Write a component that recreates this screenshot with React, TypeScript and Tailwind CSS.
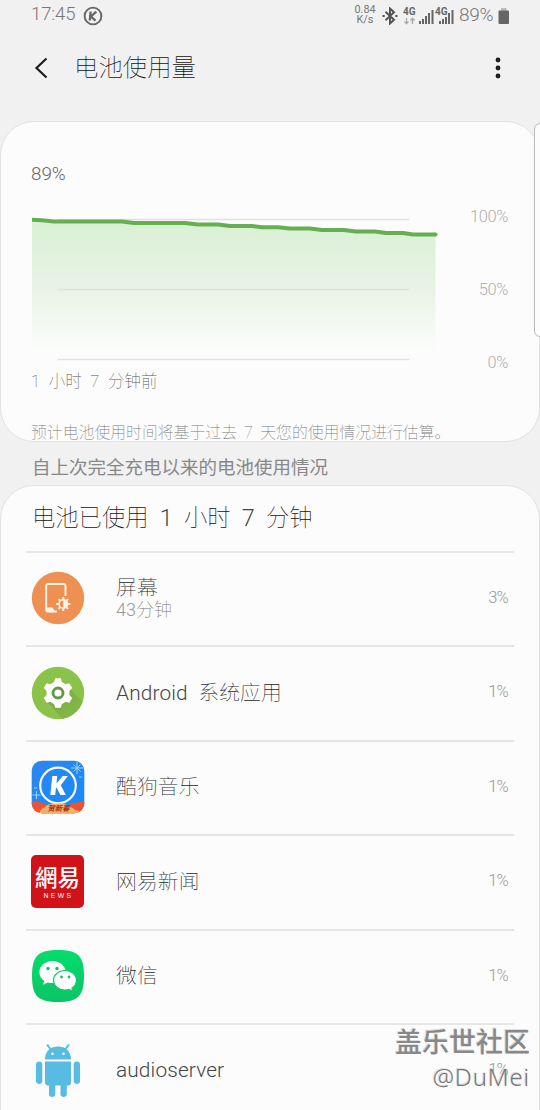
import type { ReactNode } from 'react';

type AppUsage = {
  name: string;
  detail?: string;
  percent: string;
  icon: ReactNode;
};

function ScreenIcon() {
  return (
    <svg viewBox="0 0 54 54" className="size-[54px]">
      <circle cx="27" cy="27" r="26.2" fill="#ee9052" />
      <path d="M26 40.500H17A2 2 0 0 1 15.200 38.500V15A2 2 0 0 1 17.200 13H32.500A2 2 0 0 1 34.500 15V25" fill="none" stroke="#fff3e8" strokeWidth="1.900" />
      <path d="M15 36.500h6.500l3 4.800H17a2 2 0 0 1-2-2z" fill="#fff3e8" />
      <circle cx="32.300" cy="33" r="8" fill="#ee9052" />
      <g stroke="#fff3e8" strokeWidth="1.900">
        <path d="M32.300 26v14M25.300 33h14M27.500 28.200l9.600 9.600M37.100 28.200l-9.600 9.600" />
      </g>
      <circle cx="32.300" cy="33" r="5" fill="#fff3e8" />
      <path d="M32.300 29.500a3.500 3.500 0 0 0 0 7z" fill="#ee9052" />
    </svg>
  );
}

function GearIcon() {
  return (
    <svg viewBox="0 0 54 54" className="size-[54px]">
      <defs>
        <clipPath id="gear-clip">
          <circle cx="27" cy="27" r="26.2" />
        </clipPath>
        <linearGradient id="gear-shade" x1="0" y1="0" x2="1" y2="1">
          <stop offset="0" stopColor="#78ab42" />
          <stop offset="1" stopColor="#88bd4a" />
        </linearGradient>
      </defs>
      <circle cx="27" cy="27" r="26.2" fill="#8bc34a" />
      <path d="M14 34L38 22L60 44V60H38z" fill="url(#gear-shade)" clipPath="url(#gear-clip)" />
      <g fill="#fff">
        <circle cx="27" cy="27" r="11.500" />
        <path d="M24.200 12.200h5.600l1.600 6h-8.800z" />
        <path d="M24.200 12.200h5.600l1.600 6h-8.800z" transform="rotate(60 27 27)" />
        <path d="M24.200 12.200h5.600l1.600 6h-8.800z" transform="rotate(120 27 27)" />
        <path d="M24.200 12.200h5.600l1.600 6h-8.800z" transform="rotate(180 27 27)" />
        <path d="M24.200 12.200h5.600l1.600 6h-8.800z" transform="rotate(240 27 27)" />
        <path d="M24.200 12.200h5.600l1.600 6h-8.800z" transform="rotate(300 27 27)" />
      </g>
      <circle cx="27" cy="27" r="5" fill="#fff" stroke="#67964a" strokeWidth="2.800" />
    </svg>
  );
}

function KugouIcon() {
  return (
    <svg viewBox="0 0 54 54" className="size-[54px]">
      <defs>
        <clipPath id="kugou-clip">
          <rect x="0.700" y="0.700" width="52.600" height="52.600" rx="10" />
        </clipPath>
        <linearGradient id="kugou-bg" x1="0" y1="0" x2="1" y2="1">
          <stop offset="0" stopColor="#2f86ee" />
          <stop offset="1" stopColor="#168bfb" />
        </linearGradient>
      </defs>
      <g clipPath="url(#kugou-clip)">
        <rect width="54" height="54" fill="url(#kugou-bg)" />
        <circle cx="27" cy="25.500" r="17.800" fill="none" stroke="#f5fbff" strokeWidth="2.200" />
        <path d="M21.300 16h4.900l-.7 7.400 6.200-7.400h5.200l-7.100 9.200 5 9.800h-5.400l-3.900-7.500-.6.800-.7 6.700h-4.900z" fill="#fff" />
        <g stroke="#9bd3ff" strokeWidth="1">
          <path d="M46 2v12M40 8h12M42.500 4.500l7 7M49.500 4.500l-7 7M5.500 31v8M1.500 35h8" />
          <path d="M48 17h3M3 28h3" />
        </g>
        <path d="M0 43q6-3 11 0q4 0 5 3h22q2-4 7-3q4-2 9-1v13H0z" fill="#ed5332" />
        <path d="M0 54q3-2 7-1.500q4-1 9-1q1-4 3-5q4-4 8-2q5-2 8 1q6 1 9 4.500q6 1 10 4z" fill="#f5ae68" />
        <path d="M9 51q2-3 5-4q4-4 10-3q9-2 13 2q5 1 6 5l3 3H9z" fill="#f5ae68" />
      </g>
      <text x="27.500" y="51" textAnchor="middle" fontSize="7.300" fontWeight="700" fontStyle="italic" fill="#a8321c" fontFamily="'Noto Sans CJK SC', sans-serif">贺新春</text>
    </svg>
  );
}

function NeteaseIcon() {
  return (
    <div className="flex size-[53px] flex-col items-center rounded-[5px] bg-[#d11219] text-white">
      <span className="mt-[7px] text-[22.500px] leading-[29px] font-medium font-['Noto_Sans_CJK_TC',sans-serif]">網易</span>
      <span className="mt-px pl-[2px] text-[6.800px] leading-[8px] tracking-[2.400px] font-normal font-['Liberation_Sans',sans-serif]">NEWS</span>
    </div>
  );
}

function WechatIcon() {
  return (
    <svg viewBox="0 0 54 54" className="size-[54px]">
      <defs>
        <linearGradient id="wechat-bg" x1="0" y1="0" x2="0" y2="1">
          <stop offset="0" stopColor="#04dc6c" />
          <stop offset="1" stopColor="#0bc565" />
        </linearGradient>
      </defs>
      <path d="M27 1C47 1 53 7 53 27S47 53 27 53S1 47 1 27S7 1 27 1z" fill="url(#wechat-bg)" />
      <path d="M21.500 12C14 12 8.400 17 8.400 23.200c0 3.600 1.800 6.600 4.900 8.700l-1.300 3.900 4.700-2.400c1.500.4 3 .7 4.800.7 7.400 0 13.100-4.900 13.100-11S29 12 21.500 12z" fill="#fff" />
      <path d="M34 21.500c-6.500 0-11.500 4.400-11.500 9.700S27.500 41 34 41c1.400 0 2.800-.2 4-.5l3.900 2-1-3.300c2.800-1.800 4.600-4.600 4.600-7.900C45.500 26 40.500 21.500 34 21.500z" fill="#fff" stroke="#08d069" strokeWidth="1.200" />
      <g fill="#10c567">
        <circle cx="17" cy="19.500" r="1.700" />
        <circle cx="26" cy="19.500" r="1.700" />
        <circle cx="30.500" cy="28" r="1.400" />
        <circle cx="38" cy="28" r="1.400" />
      </g>
    </svg>
  );
}

function AndroidIcon() {
  return (
    <svg viewBox="0 0 54 54" className="size-[54px]" fill="#58bce2">
      <path d="M14 16.500C14 8 19.500 3.500 27 3.500S40 8 40 16.500z" />
      <path d="M19.500 6L16.500 2.200M34.500 6l3-3.800" stroke="#58bce2" strokeWidth="2" strokeLinecap="round" />
      <circle cx="21.500" cy="10.800" r="1.300" fill="#fff" />
      <circle cx="32.500" cy="10.800" r="1.300" fill="#fff" />
      <rect x="5" y="18.500" width="6.300" height="22.500" rx="3.150" />
      <rect x="42.700" y="18.500" width="6.300" height="22.500" rx="3.150" />
      <path d="M14 18.500h26v21a3 3 0 0 1-3 3H17a3 3 0 0 1-3-3z" />
      <rect x="18" y="36" width="6.300" height="18" rx="3.150" />
      <rect x="29.500" y="36" width="6.300" height="18" rx="3.150" />
    </svg>
  );
}

const apps: AppUsage[] = [
  { name: '屏幕', detail: '43分钟', percent: '3%', icon: <ScreenIcon /> },
  { name: 'Android 系统应用', percent: '1%', icon: <GearIcon /> },
  { name: '酷狗音乐', percent: '1%', icon: <KugouIcon /> },
  { name: '网易新闻', percent: '1%', icon: <NeteaseIcon /> },
  { name: '微信', percent: '1%', icon: <WechatIcon /> },
  { name: 'audioserver', percent: '1%', icon: <AndroidIcon /> },
];

function StatusBar() {
  return (
    <div className="flex h-[30px] items-center pr-[30px] pl-[31px] font-light text-[#777]">
      <span className="text-[18.500px] tracking-[-0.100px]">17:45</span>
      <svg viewBox="0 0 20 20" className="mt-[2px] ml-2 size-5" fill="none" stroke="#666" strokeWidth="1.900">
        <circle cx="10" cy="10" r="8.400" />
        <path d="M7.600 5.500l-.8 9M13.300 5.700L8 10.500l4.500 4.200" strokeWidth="2.300" />
      </svg>
      <div className="ml-auto flex w-[22px] flex-col items-center text-[10.800px] leading-[10px] font-normal">
        <span>0.84</span>
        <span>K/s</span>
      </div>
      <svg viewBox="0 0 16 18" className="mt-px ml-[6px] h-[18px] w-4" fill="none" stroke="#555" strokeWidth="2">
        <path d="M3.500 4.800l8.500 8L8 16.500v-15L12 5.200l-8.500 8" />
        <path d="M.5 9h2.200M13.300 9h2.200" strokeWidth="2.200" />
      </svg>
      <svg viewBox="0 0 52 18" className="mt-px ml-[5px] h-[18px] w-[52px]" fill="#666">
        <text x="0" y="8.200" fontSize="10" fontWeight="700" fontFamily="Roboto, sans-serif">4G</text>
        <path d="M3.500 11v6M1.500 14.500l2 2.200 2-2.200M9.500 17v-6M7.500 13.500l2-2.200 2 2.200" fill="none" stroke="#aaa" strokeWidth="1.300" />
        <path d="M16 14h2v3h-2zM19 12h2v5h-2zM22 9h2v8h-2zM25 6h2v11h-2zM28.500 3h2v14h-2z" />
        <path d="M36 14h2v3h-2zM39 12h2v5h-2zM42 10h2v7h-2zM45 6h2v11h-2zM48.500 3h2v14h-2z" />
        <text x="32" y="8.200" fontSize="10" fontWeight="700" fontFamily="Roboto, sans-serif">4G</text>
      </svg>
      <span className="ml-[4px] w-[37px] text-[19px] tracking-[-0.300px]">89%</span>
      <svg viewBox="0 0 12 18" className="mt-px ml-[2px] h-[18px] w-3">
        <rect x="3" y="1" width="5.500" height="3" fill="#bbb" />
        <rect x="0.500" y="3.500" width="10.500" height="13.500" rx="1" fill="#666" />
      </svg>
    </div>
  );
}

function TitleBar() {
  return (
    <header className="flex h-[76px] items-center pr-[38px] pl-[34px]">
      <svg viewBox="0 0 14 22" className="h-[22px] w-[14px]" fill="none" stroke="#1d1d1d" strokeWidth="2.200">
        <path d="M12.500 1.500L2.500 11l10 9.500" />
      </svg>
      <h1 className="ml-[26px] text-[24.400px] leading-8 text-[#111]">电池使用量</h1>
      <svg viewBox="0 0 8 22" className="ml-auto h-[22px] w-2" fill="#1d1d1d">
        <circle cx="4" cy="3" r="2.400" />
        <circle cx="4" cy="11" r="2.400" />
        <circle cx="4" cy="19" r="2.400" />
      </svg>
    </header>
  );
}

function BatteryChart() {
  return (
    <div className="mt-[15px] flex justify-between">
      <svg viewBox="0 0 410 160" className="ml-[0.500px] h-[160px] w-[410px]">
        <defs>
          <linearGradient id="battery-fill" x1="0" y1="0" x2="0" y2="1">
            <stop offset="0" stopColor="#d9f0d4" />
            <stop offset="0.500" stopColor="#e8f3e5" />
            <stop offset="1" stopColor="#fcfcfc" />
          </linearGradient>
        </defs>
        <path d="M0 19L25 21H90L102 22.500H153L166 24H186L198 25.500H220L230 26.700H246L258 28H278L290 29.500H312L324 31H343L354 32.500H371L381 34H403.500V152H0z" fill="url(#battery-fill)" />
        <path d="M25.500 18.500h352M25.500 88.500h352M25.500 158.500h352" stroke="#e0e1e0" strokeWidth="1.500" />
        <path d="M0 18.800L10 19.200L22 20.500H90L102 22H153L166 23.500H186L198 25H220L230 26.200H246L258 27.500H278L290 29H312L324 30.500H343L354 32H371L381 33.500H403.500" fill="none" stroke="#66af51" strokeWidth="4" strokeLinejoin="round" />
        <circle cx="403.500" cy="33.500" r="2" fill="#66af51" />
      </svg>
      <div className="flex h-[173px] flex-col justify-between pt-[5px] text-right text-[16.500px] leading-[22px] font-light tracking-[-0.400px] text-[#b0b0b0]">
        <span>100%</span>
        <span>50%</span>
        <span>0%</span>
      </div>
    </div>
  );
}

function UsageRow({ app }: { app: AppUsage }) {
  return (
    <li className="flex h-[94.450px] items-center border-t-2 border-[#e6e6e6] pr-[6px] pb-[2px] pl-[4.500px]">
      <div className="flex w-[54px] justify-center">{app.icon}</div>
      <div className="ml-[31.500px] flex flex-col">
        <span className="text-[20.800px] leading-[24px] tracking-[0.100px] text-[#1c1c1c] [word-spacing:5.500px]">
          {app.name.split(' ').map((word, i) => (
            <span key={word} className={/^[a-z]/i.test(word) ? 'font-light tracking-[0.150px] text-[#444]' : ''}>
              {i > 0 && ' '}
              {word}
            </span>
          ))}
        </span>
        {app.detail && (
          <span className="-mt-px text-[18px] leading-[21px] text-[#777]">
            <span className="font-light text-[#999]">{app.detail.slice(0, 2)}</span>
            {app.detail.slice(2)}
          </span>
        )}
      </div>
      <span className="ml-auto text-[16.500px] font-light tracking-[-0.800px] text-[#999]">{app.percent}</span>
    </li>
  );
}

export default function App() {
  return (
    <div className="relative h-[1110px] w-[540px] overflow-hidden bg-[#f1f1f1] font-['Roboto','Noto_Sans_CJK_SC',sans-serif] font-thin">
      <StatusBar />
      <TitleBar />

      <section className="mt-[15px] h-[321px] rounded-[34px] border border-[#e2e2e2] bg-[#fcfcfc] pr-[31px] pl-[30px]">
        <p className="pt-[40px] text-[18.800px] leading-6 font-light text-[#666]">89%</p>
        <BatteryChart />
        <p className="-mt-[4px] text-[16.500px] leading-6 text-[#555] [word-spacing:4.700px]">1 小时 7 分钟前</p>
        <p className="mt-[27px] text-[15.850px] leading-6 whitespace-nowrap text-[#777] [word-spacing:3.500px]">预计电池使用时间将基于过去 7 天您的使用情况进行估算。</p>
      </section>

      <h2 className="h-[43px] pt-[13px] pl-[32px] text-[18.500px] leading-[26px] font-normal text-[#888]">自上次完全充电以来的电池使用情况</h2>

      <section className="h-[700px] rounded-t-[34px] border border-[#e2e2e2] bg-[#fcfcfc] px-[25px]">
        <h3 className="h-[65px] pt-[16px] pl-[6px] text-[23.300px] leading-8 text-[#111] [word-spacing:5.700px]">
          电池已使用 <span className="font-light text-[#444]">1</span> 小时 <span className="font-light text-[#444]">7</span> 分钟
        </h3>
        <ul>
          {apps.map((app) => (
            <UsageRow key={app.name} app={app} />
          ))}
        </ul>
      </section>

      {/* edge panel handle */}
      <div className="absolute top-[123px] -right-[6px] h-[214px] w-[12px] rounded-[6px] border border-[#bbb] bg-[#fcfcfc]" />

      <div className="absolute right-[10px] bottom-[17px] flex flex-col items-end text-[#888] [text-shadow:-1px_-1px_0_#ddd]">
        <span className="text-[27px] leading-[36px] font-medium">盖乐世社区</span>
        <span className="text-[24px] leading-[32px] font-light tracking-[0.800px] text-[#777] font-['Noto_Sans',sans-serif]">@DuMei</span>
      </div>
    </div>
  );
}
